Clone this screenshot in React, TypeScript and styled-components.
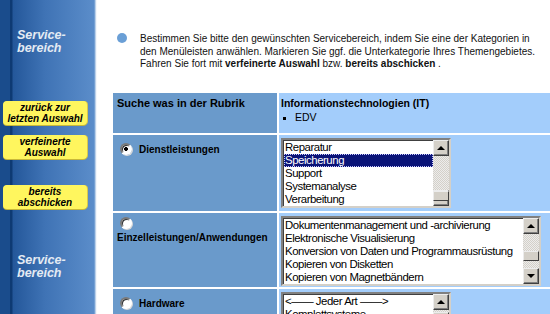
import React from 'react';
import styled, { createGlobalStyle } from 'styled-components';

const GlobalStyle = createGlobalStyle`
  html, body {
    margin: 0;
    padding: 0;
    background: #ffffff;
    overflow: hidden;
  }
  body {
    font-family: "Liberation Sans", Arial, sans-serif;
  }
`;

type Option = { label: string; selected?: boolean };

const categories: {
  name: string;
  checked: boolean;
  stacked?: boolean;
  width: number;
  thumb: number;
  options: Option[];
}[] = [
  {
    name: 'Dienstleistungen',
    checked: true,
    width: 170,
    thumb: 35,
    options: [
      { label: 'Reparatur' },
      { label: 'Speicherung', selected: true },
      { label: 'Support' },
      { label: 'Systemanalyse' },
      { label: 'Verarbeitung' },
    ],
  },
  {
    name: 'Einzelleistungen/Anwendungen',
    checked: false,
    stacked: true,
    width: 260,
    thumb: 17,
    options: [
      { label: 'Dokumentenmanagement und -archivierung' },
      { label: 'Elektronische Visualisierung' },
      { label: 'Konversion von Daten und Programmausrüstung' },
      { label: 'Kopieren von Disketten' },
      { label: 'Kopieren von Magnetbändern' },
    ],
  },
  {
    name: 'Hardware',
    checked: false,
    width: 170,
    thumb: 2,
    options: [
      { label: '<—— Jeder Art ——>' },
      { label: 'Komplettsysteme' },
      { label: 'Drucker' },
      { label: 'Monitore' },
      { label: 'Netzwerke' },
    ],
  },
];

function ListBox({ width, thumb, options }: { width: number; thumb: number; options: Option[] }) {
  return (
    <ListFrame $width={width}>
      <ListItems>
        {options.map((o) => (
          <ListItem key={o.label} $selected={!!o.selected}>
            {o.label}
          </ListItem>
        ))}
      </ListItems>
      <ScrollBar>
        <ScrollButton>
          <Arrow $up />
        </ScrollButton>
        <Track>
          <Thumb style={{ top: thumb }} />
        </Track>
        <ScrollButton>
          <Arrow />
        </ScrollButton>
      </ScrollBar>
    </ListFrame>
  );
}

function App() {
  return (
    <Page>
      <GlobalStyle />
      <Sidebar>
        <SideTitle>
          Service-
          <br />
          bereich
        </SideTitle>
        <SideButtons>
          <YellowButton>
            zurück zur
            <br />
            letzten Auswahl
          </YellowButton>
          <YellowButton>
            verfeinerte
            <br />
            Auswahl
          </YellowButton>
          <YellowButton $gap={26}>
            bereits
            <br />
            abschicken
          </YellowButton>
        </SideButtons>
        <SideTitle $bottom>
          Service-
          <br />
          bereich
        </SideTitle>
      </Sidebar>
      <Main>
        <Intro>
          <Dot />
          <IntroText>
            Bestimmen Sie bitte den gewünschten Servicebereich, indem Sie eine der Kategorien in
            <br />
            den Menüleisten anwählen. Markieren Sie ggf. die Unterkategorie Ihres Themengebietes.
            <br />
            Fahren Sie fort mit <b>verfeinerte Auswahl</b> bzw. <b>bereits abschicken</b> .
          </IntroText>
        </Intro>
        <Table>
          <HeadCell>Suche was in der Rubrik</HeadCell>
          <InfoCell>
            <b>Informationstechnologien (IT)</b>
            <SubList>
              <li>EDV</li>
            </SubList>
          </InfoCell>
          {categories.map((c) => (
            <React.Fragment key={c.name}>
              <LabelCell $stacked={!!c.stacked}>
                <Radio $checked={c.checked} />
                {c.stacked && <br />}
                <span>{c.name}</span>
              </LabelCell>
              <SelectCell>
                <ListBox width={c.width} thumb={c.thumb} options={c.options} />
              </SelectCell>
            </React.Fragment>
          ))}
        </Table>
      </Main>
    </Page>
  );
}

export default App;

const Page = styled.div`
  display: flex;
  width: 550px;
  height: 314px;
  overflow: hidden;
`;

const Sidebar = styled.div`
  flex: 0 0 97px;
  display: flex;
  flex-direction: column;
  background:
    linear-gradient(to right, transparent 0, transparent 94px, #8fb3dc 95px, #e6eef8 96px, #ffffff 97px),
    linear-gradient(to right, #1a4c8c 0, #1a4c8c 10px, #0e3a73 10px, #0e3a73 12px, #24579a 13px, #3f73b5 45px, #5b8dca 94px);
`;

const SideTitle = styled.div<{ $bottom?: boolean }>`
  margin: ${(p) => (p.$bottom ? '45px' : '29px')} 0 0 17px;
  color: #e4ebf3;
  font: italic bold 12.5px/13px "Liberation Sans", Arial, sans-serif;
`;

const SideButtons = styled.div`
  display: flex;
  flex-direction: column;
  margin-top: 46px;
  gap: 10px;
`;

const YellowButton = styled.div<{ $gap?: number }>`
  margin: ${(p) => (p.$gap ? `${p.$gap - 10}px` : '0')} 0 0 3px;
  width: 84px;
  height: 24px;
  box-sizing: border-box;
  padding-top: 1px;
  background: #fff65e;
  border-radius: 4px;
  box-shadow: 0 1px 0 #c8b83a, 1px 0 0 #d8c84a;
  color: #000000;
  text-align: center;
  font: italic bold 10px/11px "Liberation Sans", Arial, sans-serif;
`;

const Main = styled.div`
  flex: 1;
  display: flex;
  flex-direction: column;
  padding: 33px 0 0 16px;
  min-width: 0;
`;

const Intro = styled.div`
  display: flex;
  align-items: flex-start;
  gap: 13px;
  padding-left: 4px;
`;

const Dot = styled.div`
  flex: 0 0 10px;
  height: 10px;
  border-radius: 50%;
  background: #6a9fd6;
`;

const IntroText = styled.div`
  font: 10px/12.5px "Liberation Sans", Arial, sans-serif;
  color: #111111;
  white-space: nowrap;
  b {
    font-weight: bold;
  }
`;

const Table = styled.div`
  display: grid;
  grid-template-columns: 164px 1fr;
  grid-template-rows: 40px 76px 74px 76px;
  gap: 2px;
  margin-top: 22px;
  background: #ffffff;
`;

const HeadCell = styled.div`
  background: #6a9acb;
  padding: 4px 4px;
  font: bold 11px/13px "Liberation Sans", Arial, sans-serif;
  color: #000000;
`;

const InfoCell = styled.div`
  background: #a3cdfb;
  padding: 4px 2px;
  font: bold 10.5px/13px "Liberation Sans", Arial, sans-serif;
  color: #000000;
`;

const SubList = styled.ul`
  margin: 1px 0 0;
  padding-left: 14px;
  list-style: square;
  font-weight: normal;
  li::marker {
    font-size: 9px;
  }
`;

const LabelCell = styled.div<{ $stacked: boolean }>`
  background: #6a9acb;
  padding: ${(p) => (p.$stacked ? '3px 4px' : '7px 4px')};
  font: bold 10px/13px "Liberation Sans", Arial, sans-serif;
  color: #000000;
  span {
    vertical-align: middle;
    line-height: ${(p) => (p.$stacked ? '18px' : '13px')};
  }
`;

const Radio = styled.span<{ $checked: boolean }>`
  display: inline-block;
  vertical-align: middle;
  box-sizing: border-box;
  width: 12px;
  height: 12px;
  margin: 0 7px 0 3px;
  border-radius: 50%;
  border: 2px solid;
  border-color: #7a7a7a #ffffff #ffffff #7a7a7a;
  background: ${(p) =>
    p.$checked
      ? 'radial-gradient(circle, #000000 0, #000000 1.6px, #ffffff 2.2px)'
      : '#ffffff'};
  box-shadow: inset 1px 1px 0 #303030, 1px 1px 0 #d8d8d8;
`;

const SelectCell = styled.div`
  background: #a3cdfb;
  padding: 3px 2px;
`;

const ListFrame = styled.div<{ $width: number }>`
  display: flex;
  width: ${(p) => p.$width}px;
  height: 70px;
  box-sizing: border-box;
  background: #ffffff;
  border: 2px solid;
  border-color: #808080 #d4d0c8 #d4d0c8 #808080;
  box-shadow: inset 1px 1px 0 #404040;
`;

const ListItems = styled.div`
  flex: 1;
  min-width: 0;
  padding: 1px 0 0 1px;
  overflow: hidden;
`;

const ListItem = styled.div<{ $selected: boolean }>`
  height: 13px;
  box-sizing: border-box;
  padding-left: 1px;
  font: 11.4px/12px "Liberation Sans", Arial, sans-serif;
  letter-spacing: -0.45px;
  white-space: nowrap;
  color: ${(p) => (p.$selected ? '#ffffff' : '#000000')};
  background: ${(p) => (p.$selected ? '#0a1478' : 'transparent')};
  outline: ${(p) => (p.$selected ? '1px dotted #c8c8ff' : 'none')};
  outline-offset: -1px;
`;

const ScrollBar = styled.div`
  flex: 0 0 16px;
  display: flex;
  flex-direction: column;
`;

const ScrollButton = styled.div`
  flex: 0 0 16px;
  box-sizing: border-box;
  display: flex;
  align-items: center;
  justify-content: center;
  background: #d4d0c8;
  border: 1px solid;
  border-color: #ececec #404040 #404040 #ececec;
  box-shadow: inset -1px -1px 0 #808080;
`;

const Arrow = styled.span<{ $up?: boolean }>`
  width: 0;
  height: 0;
  border-left: 4px solid transparent;
  border-right: 4px solid transparent;
  ${(p) => (p.$up ? 'border-bottom: 4px solid #000;' : 'border-top: 4px solid #000;')}
`;

const Track = styled.div`
  flex: 1;
  position: relative;
  background-color: #ececec;
  background-image:
    linear-gradient(45deg, #d4d0c8 25%, transparent 25%, transparent 75%, #d4d0c8 75%),
    linear-gradient(45deg, #d4d0c8 25%, transparent 25%, transparent 75%, #d4d0c8 75%);
  background-size: 2px 2px;
  background-position: 0 0, 1px 1px;
`;

const Thumb = styled.div`
  position: absolute;
  left: 0;
  right: 0;
  height: 10px;
  box-sizing: border-box;
  background: #d4d0c8;
  border: 1px solid;
  border-color: #ececec #404040 #404040 #ececec;
`;
